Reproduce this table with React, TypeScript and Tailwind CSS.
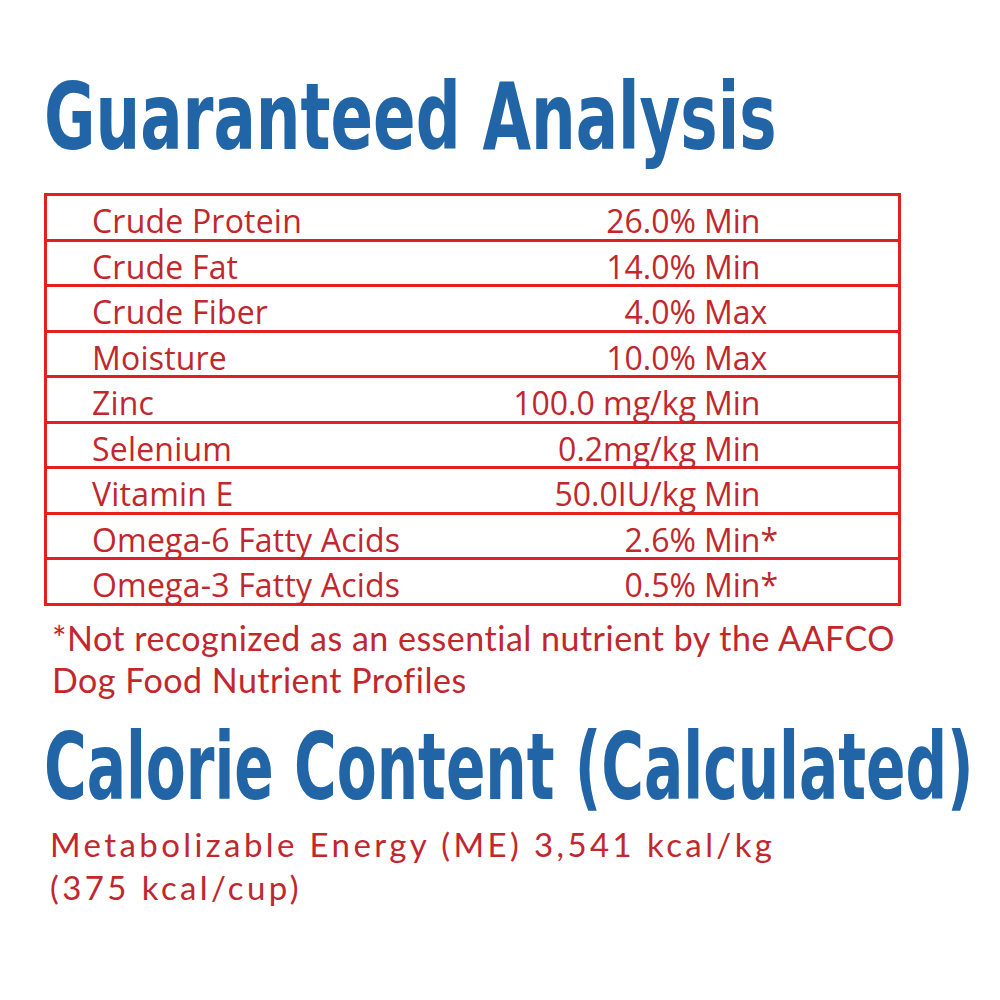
import React from 'react';

type Row = { label: string; amount: string; qual: string; star?: boolean };

const rows: Row[] = [
  { label: 'Crude Protein', amount: '26.0%', qual: 'Min' },
  { label: 'Crude Fat', amount: '14.0%', qual: 'Min' },
  { label: 'Crude Fiber', amount: '4.0%', qual: 'Max' },
  { label: 'Moisture', amount: '10.0%', qual: 'Max' },
  { label: 'Zinc', amount: '100.0 mg/kg', qual: 'Min' },
  { label: 'Selenium', amount: '0.2mg/kg', qual: 'Min' },
  { label: 'Vitamin E', amount: '50.0IU/kg', qual: 'Min' },
  { label: 'Omega-6 Fatty Acids', amount: '2.6%', qual: 'Min', star: true },
  { label: 'Omega-3 Fatty Acids', amount: '0.5%', qual: 'Min', star: true },
];

const heading =
  "inline-block origin-left whitespace-nowrap font-['DejaVu_Sans_Condensed','DejaVu_Sans',sans-serif] font-stretch-condensed font-bold text-[93px] leading-none text-[#2165a6]";

export default function App() {
  return (
    <div className="h-[1000px] w-[1000px] overflow-hidden bg-white pl-[44px] pt-[71px]">
      <h1 className={`${heading} scale-x-[0.75]`}>Guaranteed Analysis</h1>

      <div className="mt-[29px] w-[857px] divide-y-[3px] divide-[#e2201f] border-[3px] border-[#e2201f]">
        {rows.map((row) => (
          <div
            key={row.label}
            className="flex h-[45.5px] items-start pt-[9px] font-['Open_Sans',sans-serif] text-[32px] leading-none text-[#c1272d] last:h-[42.5px]"
          >
            <span className="flex-1 pl-[45px] tracking-[0.2px]">{row.label}</span>
            <span className="text-right">{row.amount}</span>
            <span className="w-[202px] pl-2">
              {row.qual}
              {row.star && '*'}
            </span>
          </div>
        ))}
      </div>

      <p className="mt-[11px] pl-[8px] font-['Lato',sans-serif] text-[34px] tracking-[0.5px] leading-[42px] text-[#c1272d]">
        *Not recognized as an essential nutrient by the AAFCO
        <br />
        Dog Food Nutrient Profiles
      </p>

      <h2 className={`mt-[20px] ${heading} scale-x-[0.695]`}>Calorie Content (Calculated)</h2>

      <p className="mt-[9px] pl-[6px] font-['Lato',sans-serif] text-[33px] tracking-[3.4px] leading-[43px] text-[#c1272d]">
        Metabolizable Energy (ME) 3,541 kcal/kg
        <br />
        (375 kcal/cup)
      </p>
    </div>
  );
}
